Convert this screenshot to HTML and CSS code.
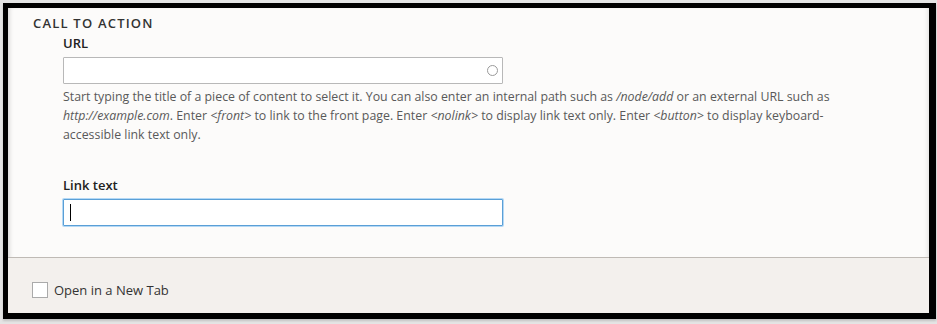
FILE: index.html
```html
<!DOCTYPE html>
<html lang="en">
<head>
    <meta charset="UTF-8">
    <meta name="viewport" content="width=device-width, initial-scale=1.0">
    <title>Call to action</title>
    <link rel="stylesheet" href="styles.css">
</head>
<body>

    <div class="frame">
        <section class="panel">
            <h2 class="panel-title">Call to action</h2>

            <div class="form-item">
                <label class="form-label" for="cta-url">URL</label>
                <div class="autocomplete">
                    <input class="form-text" id="cta-url" type="text">
                    <span class="throbber"></span>
                </div>
                <p class="description">
                    Start typing the title of a piece of content to select it. You can also enter an internal path such as <em>/node/add</em> or an external URL such as <em>http://example.com</em>. Enter <em>&lt;front&gt;</em> to link to the front page. Enter <em>&lt;nolink&gt;</em> to display link text only. Enter <em>&lt;button&gt;</em> to display keyboard-accessible link text only.
                </p>
            </div>

            <div class="form-item form-item-last">
                <label class="form-label" for="cta-text">Link text</label>
                <div class="autocomplete">
                    <input class="form-text is-focused" id="cta-text" type="text">
                    <span class="caret"></span>
                </div>
            </div>
        </section>

        <footer class="panel-footer">
            <label class="checkbox">
                <input type="checkbox">
                <span>Open in a New Tab</span>
            </label>
        </footer>
    </div>

</body>
</html>
```

FILE: styles.css
```css
/* --- Base --- */
:root {
    --panel-bg: #fcfbfa;
    --footer-bg: #f3f0ed;
    --text: #222;
    --text-muted: #595959;
    --input-border: #b8b8b8;
    --focus: #5a9fd6;
    --focus-glow: #b4d8f5;
}

body, html {
    margin: 0;
    padding: 0;
    height: 100%;
    background: #e4e4e4;
    font-family: 'Open Sans', 'Liberation Sans', sans-serif;
    font-size: 13px;
    color: var(--text);
    overflow: hidden;
}

/* --- Outer frame --- */
.frame {
    box-sizing: border-box;
    width: 933px;
    height: 316px;
    margin: 3px 0 0 3px;
    border: solid #000;
    border-width: 5px 7px 6px 5px;
    background: var(--panel-bg);
    display: flex;
    flex-direction: column;
    box-shadow: inset 4px 0 5px -3px rgba(0, 0, 0, 0.18),
                inset -4px 0 5px -3px rgba(0, 0, 0, 0.12),
                0 2px 2px rgba(0, 0, 0, 0.15);
}

/* --- Panel body --- */
.panel {
    flex: 1;
    padding: 5px 25px 0 25px;
    border-bottom: 1px solid #bfbab5;
}

.panel-title {
    margin: 0;
    font-size: 13px;
    line-height: 20px;
    font-weight: 600;
    text-transform: uppercase;
    letter-spacing: 1.2px;
    color: #333;
}

.form-item {
    padding-left: 30px;
}

.form-item-last {
    margin-top: 31px;
}

.form-label {
    display: block;
    font-weight: 600;
    line-height: 20px;
    margin-bottom: 4px;
}

.autocomplete {
    position: relative;
    width: 440px;
}

.form-text {
    display: block;
    box-sizing: border-box;
    width: 440px;
    height: 27px;
    margin: 0;
    border: 1px solid var(--input-border);
    border-radius: 1px;
    background: #fff;
    font: inherit;
    outline: none;
}

.form-text.is-focused {
    border-color: var(--focus);
    box-shadow: 0 0 0 1px var(--focus-glow);
}

/* autocomplete indicator circle */
.throbber {
    position: absolute;
    top: 8px;
    right: 5px;
    width: 9px;
    height: 9px;
    border: 1px solid #9a9a9a;
    border-radius: 50%;
}

/* text cursor shown in the focused field */
.caret {
    position: absolute;
    top: 5px;
    left: 7px;
    width: 1px;
    height: 17px;
    background: #000;
}

.description {
    max-width: 800px;
    margin: 3px 0 0 0;
    font-size: 12.35px;
    line-height: 19px;
    color: var(--text-muted);
}

/* --- Footer --- */
.panel-footer {
    height: 55px;
    background: var(--footer-bg);
    display: flex;
    align-items: center;
    padding: 8px 24px 0 24px;
    box-sizing: border-box;
}

.checkbox {
    display: flex;
    align-items: center;
    gap: 6px;
    color: #333;
}

.checkbox input {
    appearance: none;
    width: 16px;
    height: 16px;
    margin: 0;
    border: 1px solid #aaa;
    background: #fff;
}
```
